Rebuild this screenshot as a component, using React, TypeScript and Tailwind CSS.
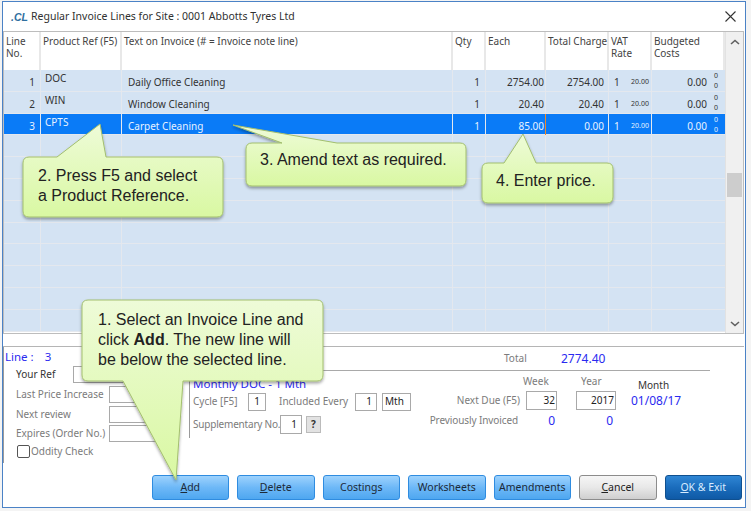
import React from "react";

const cols = "grid grid-cols-[37px_81px_331px_33px_60px_63px_43px_73px]";
const cell = "border-r border-r-[#e4e8ee] overflow-hidden whitespace-nowrap";
const hcell = "border-r-2 border-r-[#e8e8e8] px-[2px] pt-[3px] leading-[12px] text-[10px] text-[#444] whitespace-nowrap";

const rows = [
  { n: "1", ref: "DOC", text: "Daily Office Cleaning", qty: "1", each: "2754.00", total: "2754.00" },
  { n: "2", ref: "WIN", text: "Window Cleaning", qty: "1", each: "20.40", total: "20.40" },
  { n: "3", ref: "CPTS", text: "Carpet Cleaning", qty: "1", each: "85.00", total: "0.00", sel: true },
];

function Row({ r }: { r: (typeof rows)[number] }) {
  const s = r.sel;
  return (
    <div className={`${cols} h-[21.8px] text-[10px] border-b border-b-[#e4e8ee] ${s ? "bg-[#0a7bf7] text-[#e8f2ff]" : "bg-[#d4e3f3] text-[#333]"}`}>
      <div className={`${cell} text-right pr-[5px] pt-[5px]`}>{r.n}</div>
      <div className={`${cell} pl-[4px] pt-[1px]`}>{r.ref}</div>
      <div className={`${cell} pl-[6px] pt-[5px]`}>{r.text}</div>
      <div className={`${cell} text-right pr-[5px] pt-[5px]`}>{r.qty}</div>
      <div className={`${cell} text-right pr-[1px] pt-[5px] ${s ? "border-r-[#f08a2a]" : ""}`}>{r.each}</div>
      <div className={`${cell} text-right pr-[4px] pt-[5px]`}>{r.total}</div>
      <div className={`${cell} flex justify-between pl-[5px] pr-[2px] pt-[5px]`}>
        <span>1</span>
        <span className="text-[7px] leading-[13px]">20.00</span>
      </div>
      <div className="flex justify-end pr-[2px]">
        <span className="pt-[5px]">0.00</span>
        <span className="text-[7px] leading-[10px] w-[16px] pl-[7px] pt-[1px]">0<br />0</span>
      </div>
    </div>
  );
}

function EmptyRow() {
  return (
    <div className={`${cols} h-[21.8px] bg-[#d4e3f3] border-b border-b-[#e4e8ee]`}>
      {Array.from({ length: 7 }).map((_, i) => (
        <div key={i} className="border-r border-r-[#e4e8ee]" />
      ))}
    </div>
  );
}

function Chevron({ up }: { up?: boolean }) {
  return (
    <svg width="10" height="6" viewBox="0 0 10 6">
      <path d={up ? "M1 5 L5 1.5 L9 5" : "M1 1 L5 4.5 L9 1"} fill="none" stroke="#606060" strokeWidth="1.6" />
    </svg>
  );
}

function Box({ className, children }: { className: string; children?: React.ReactNode }) {
  return (
    <div className={`border border-[#a9a9a9] bg-white text-[10px] text-[#222] flex items-center ${className}`}>{children}</div>
  );
}

function Label({ className = "", children }: { className?: string; children: React.ReactNode }) {
  return <span className={`text-[10px] text-[#7b7b7b] whitespace-nowrap ${className}`}>{children}</span>;
}

function Btn({ kind, children }: { kind: "blue" | "grey" | "dark"; children: React.ReactNode }) {
  const k = {
    blue: "border-[#2f8ce0] bg-gradient-to-b from-[#9dd2fd] via-[#6db8f7] to-[#4ea7f0] text-[#1c2a38]",
    grey: "border-[#8c8c8c] bg-gradient-to-b from-[#f6f6f6] via-[#e8e8e8] to-[#cfcfcf] text-[#222]",
    dark: "border-[#10508f] bg-gradient-to-b from-[#2f86d4] via-[#1a6cbc] to-[#0f5aa6] text-[#d8ecff]",
  }[kind];
  return (
    <div className={`w-[77.5px] h-[25px] rounded-[3px] border flex items-center justify-center text-[10.5px] ${k}`}>
      <span>{children}</span>
    </div>
  );
}

const shapes = [
  "M88 300 H317 Q323 300 323 306 V375 Q323 381 317 381 H183 L176 480 L123 381 H88 Q82 381 82 375 V306 Q82 300 88 300 Z",
  "M29 157 H57 L100 124 L106 157 H217 Q223 157 223 163 V211 Q223 217 217 217 H29 Q23 217 23 211 V163 Q23 157 29 157 Z",
  "M252 143 H282 L233 125 L337 143 H460 Q466 143 466 149 V180 Q466 186 460 186 H252 Q246 186 246 180 V149 Q246 143 252 143 Z",
  "M488 163 H504 L523 134 L536 163 H607 Q613 163 613 169 V197 Q613 203 607 203 H488 Q482 203 482 197 V169 Q482 163 488 163 Z",
];

export default function App() {
  return (
    <div className="relative w-[751px] h-[511px] bg-[#f4f4f4] overflow-hidden font-['Noto_Sans','Open_Sans',sans-serif]">
      <div className="ml-[2px] mt-[1px] w-[744px] h-[507px] border border-[#4b82c6] bg-white flex flex-col">
        {/* Title bar */}
        <div className="h-[29px] flex items-center pl-[8px] pr-[8px]">
          <span className="w-[20px] text-[10.5px] leading-[12px] font-bold italic text-[#2f6f9f] font-['Liberation_Sans',sans-serif]">.CL</span>
          <span className="text-[10.5px] text-[#303030]">Regular Invoice Lines for Site : 0001 Abbotts Tyres Ltd</span>
          <svg className="ml-auto mr-[1px]" width="11" height="11" viewBox="0 0 11 11">
            <path d="M0.5 0.5 L10.5 10.5 M10.5 0.5 L0.5 10.5" stroke="#333" strokeWidth="1.1" />
          </svg>
        </div>

        {/* Table */}
        <div className="mx-0 w-[741px] h-[303px] border border-[#bdbdbd] flex overflow-hidden">
          <div className="w-[721px]">
            <div className={`${cols} h-[38px] bg-white`}>
              <div className={hcell}>Line<br />No.</div>
              <div className={hcell}>Product Ref (F5)</div>
              <div className={hcell}>Text on Invoice (# = Invoice note line)</div>
              <div className={hcell}>Qty</div>
              <div className={hcell}>Each</div>
              <div className={hcell}>Total Charge</div>
              <div className={hcell}>VAT<br />Rate</div>
              <div className={`${hcell} border-r-0`}>Budgeted<br />Costs</div>
            </div>
            {rows.map((r) => <Row key={r.n} r={r} />)}
            {Array.from({ length: 9 }).map((_, i) => <EmptyRow key={i} />)}
          </div>
          <div className="w-[18px] bg-[#f0f0f0] flex flex-col items-center pt-[7px] border-l border-l-[#e2e2e2]">
            <Chevron up />
            <div className="w-[15px] h-[24px] bg-[#cdcdcd] mt-[128px]" />
            <div className="mt-auto mb-[6px]"><Chevron /></div>
          </div>
        </div>

        {/* Gap + rule */}
        <div className="h-[13px] w-[741px] border-b border-b-[#b5b5b5]" />

        {/* Form area */}
        <div className="flex h-[116px]">
          <div className="w-[186px] border-l border-l-[#9a9a9a] pl-[1px]">
            <div className="flex h-[17px] items-end text-[11.5px] leading-[14px] text-[#2a2af0]">
              <span>Line :</span>
              <span className="ml-[11px]">3</span>
            </div>
            <div className="flex items-center h-[20px] pl-[11px]">
              <span className="w-[57px] text-[10px] text-[#333]">Your Ref</span>
              <Box className="w-[100px] h-[17px]" />
            </div>
            <div className="flex items-center h-[20px] pl-[11px]">
              <Label className="w-[93px]">Last Price Increase</Label>
              <Box className="w-[64px] h-[17px]" />
            </div>
            <div className="flex items-center h-[20px] pl-[11px]">
              <Label className="w-[93px]">Next review</Label>
              <Box className="w-[64px] h-[17px]" />
            </div>
            <div className="flex items-center h-[18px] pl-[11px]">
              <Label className="w-[93px]">Expires (Order No.)</Label>
              <Box className="w-[64px] h-[17px]" />
            </div>
            <div className="flex items-center h-[18px] pl-[12px]">
              <div className="w-[13px] h-[13px] border border-[#555] rounded-[2px] bg-white mr-[1px]" />
              <Label>Oddity Check</Label>
            </div>
          </div>

          <div className="flex-1">
            <div className="h-[24px] w-[521px] border-b border-b-[#a9a9a9] flex items-center">
              <Label className="ml-[315px] w-[57px]">Total</Label>
              <span className="text-[12px] text-[#2a2af0]">2774.40</span>
            </div>
            <div className="flex">
              <div className="w-[238px] h-[67px] border-l border-l-[#9a9a9a] pl-[3px]">
                <div className="h-[20px] flex items-end text-[11.5px] leading-[14px] text-[#2a2af0]">Monthly DOC - 1 Mth</div>
                <div className="h-[21px] flex items-center">
                  <Label className="w-[55px]">Cycle [F5]</Label>
                  <Box className="w-[18px] h-[18px] justify-center">1</Box>
                  <Label className="ml-[13px] w-[76px]">Included Every</Label>
                  <Box className="w-[22px] h-[18px] justify-end pr-[4px]">1</Box>
                  <Box className="w-[29px] h-[18px] ml-[5px] pl-[2px]">Mth</Box>
                </div>
                <div className="h-[24px] flex items-center">
                  <Label className="w-[87px] tracking-[-0.2px]">Supplementary No.</Label>
                  <Box className="w-[22px] h-[19px] justify-end pr-[4px]">1</Box>
                  <div className="w-[15px] h-[17px] ml-[4px] bg-[#e2e2e2] border border-[#bbb] flex items-center justify-center text-[10px] font-bold text-[#333]">?</div>
                </div>
              </div>
              <div className="w-[280px]">
                <div className="flex h-[20px] items-center">
                  <Label className="ml-[96px] w-[58px]">Week</Label>
                  <Label className="w-[58px]">Year</Label>
                  <span className="text-[10px] text-[#333] mt-[8px] -ml-[1px]">Month</span>
                </div>
                <div className="flex h-[19px] items-center">
                  <Label className="w-[93px] text-right pr-[0px]">Next Due (F5)</Label>
                  <Box className="w-[31px] h-[19px] justify-end pr-[1px] ml-[6px]">32</Box>
                  <Box className="w-[40px] h-[19px] justify-end pr-[1px] ml-[19px]">2017</Box>
                  <span className="ml-[15px] text-[12px] text-[#2a2af0]">01/08/17</span>
                </div>
                <div className="flex h-[21px] items-center">
                  <Label className="w-[91px] text-right tracking-[-0.1px]">Previously Invoiced</Label>
                  <span className="w-[37px] text-right text-[12px] text-[#2a2af0]">0</span>
                  <span className="w-[58px] text-right text-[12px] text-[#2a2af0]">0</span>
                </div>
              </div>
            </div>
          </div>
        </div>

        {/* Buttons */}
        <div className="flex justify-end gap-[8px] pr-[3px] mt-[12px]">
          <Btn kind="blue"><u>A</u>dd</Btn>
          <Btn kind="blue"><u>D</u>elete</Btn>
          <Btn kind="blue">Costings</Btn>
          <Btn kind="blue">Worksheets</Btn>
          <Btn kind="blue">Amendments</Btn>
          <Btn kind="grey"><u>C</u>ancel</Btn>
          <Btn kind="dark"><u>O</u>K &amp; Exit</Btn>
        </div>
      </div>

      {/* Callouts */}
      <svg className="absolute left-0 top-0 pointer-events-none" width="751" height="511" viewBox="0 0 751 511">
        <defs>
          <linearGradient id="cg" x1="0" y1="0" x2="0" y2="1">
            <stop offset="0" stopColor="#eefbd8" />
            <stop offset="1" stopColor="#d9f8a2" />
          </linearGradient>
          <filter id="sh" x="-10%" y="-10%" width="120%" height="125%">
            <feDropShadow dx="0" dy="2" stdDeviation="1.5" floodColor="#000" floodOpacity="0.35" />
          </filter>
        </defs>
        {shapes.map((d, i) => (
          <path key={i} d={d} fill="url(#cg)" stroke="#a3bf6e" strokeWidth="1" filter="url(#sh)" />
        ))}
      </svg>
      <div className="absolute left-[98px] top-[310px] w-[225px] text-[16px] leading-[20px] text-[#222] font-['Liberation_Sans',sans-serif]">
        1. Select an Invoice Line and<br />click <b>Add</b>. The new line will<br />be below the selected line.
      </div>
      <div className="absolute left-[38px] top-[166px] text-[16px] leading-[20px] text-[#222] font-['Liberation_Sans',sans-serif]">
        2. Press F5 and select<br />a Product Reference.
      </div>
      <div className="absolute left-[260px] top-[150px] text-[16px] leading-[20px] text-[#222] font-['Liberation_Sans',sans-serif]">
        3. Amend text as required.
      </div>
      <div className="absolute left-[496px] top-[171px] text-[16px] leading-[20px] text-[#222] font-['Liberation_Sans',sans-serif]">
        4. Enter price.
      </div>
    </div>
  );
}
